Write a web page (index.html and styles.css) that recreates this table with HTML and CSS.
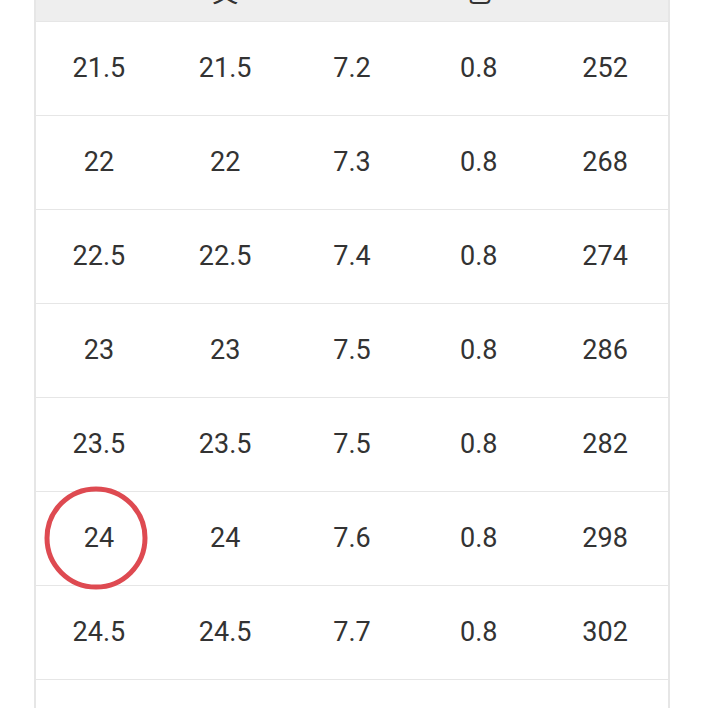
FILE: index.html
```html
<!DOCTYPE html>
<html lang="zh">
<head>
<meta charset="utf-8">
<title>Size chart</title>
<link rel="stylesheet" href="styles.css">
</head>
<body>
<div class="sheet">
  <table class="chart">
    <thead>
      <tr class="head">
        <th></th><th>文</th><th></th><th>己</th><th></th>
      </tr>
    </thead>
    <tbody>
      <tr><td>21.5</td><td>21.5</td><td>7.2</td><td>0.8</td><td>252</td></tr>
      <tr><td>22</td><td>22</td><td>7.3</td><td>0.8</td><td>268</td></tr>
      <tr><td>22.5</td><td>22.5</td><td>7.4</td><td>0.8</td><td>274</td></tr>
      <tr><td>23</td><td>23</td><td>7.5</td><td>0.8</td><td>286</td></tr>
      <tr><td>23.5</td><td>23.5</td><td>7.5</td><td>0.8</td><td>282</td></tr>
      <tr><td class="marked">24<span class="ring"></span></td><td>24</td><td>7.6</td><td>0.8</td><td>298</td></tr>
      <tr><td>24.5</td><td>24.5</td><td>7.7</td><td>0.8</td><td>302</td></tr>
      <tr><td>25</td><td>25</td><td>7.8</td><td>0.8</td><td>310</td></tr>
    </tbody>
  </table>
</div>
</body>
</html>
```

FILE: styles.css
```css
html, body {
  margin: 0;
  padding: 0;
  background: #ffffff;
  overflow: hidden;
}
.sheet {
  width: 708px;
  height: 708px;
  overflow: hidden;
}
.chart {
  margin-top: -73px;
  margin-left: 34px;
  width: 636px;
  border-collapse: collapse;
  table-layout: fixed;
  border-left: 2px solid #e6e6e6;
  border-right: 2px solid #e6e6e6;
  font-family: Roboto, "Noto Sans CJK SC", sans-serif;
  color: #333333;
}
.head th {
  box-sizing: border-box;
  height: 94px;
  padding: 0 0 17px 0;
  background: #eeeeee;
  vertical-align: bottom;
  font-weight: 400;
  font-size: 26px;
  line-height: 26px;
  color: #333333;
  font-family: "Noto Sans CJK SC", sans-serif;
}
.chart td {
  height: 93px;
  padding: 0;
  text-align: center;
  vertical-align: middle;
  font-size: 27px;
  border-top: 1px solid #e6e6e6;
}
.marked {
  position: relative;
}
.ring {
  position: absolute;
  left: 50%;
  top: 50%;
  width: 93px;
  height: 93px;
  border: 5px solid #de4a51;
  border-radius: 50%;
  transform: translate(calc(-50% - 3px), -50%);
}
```
